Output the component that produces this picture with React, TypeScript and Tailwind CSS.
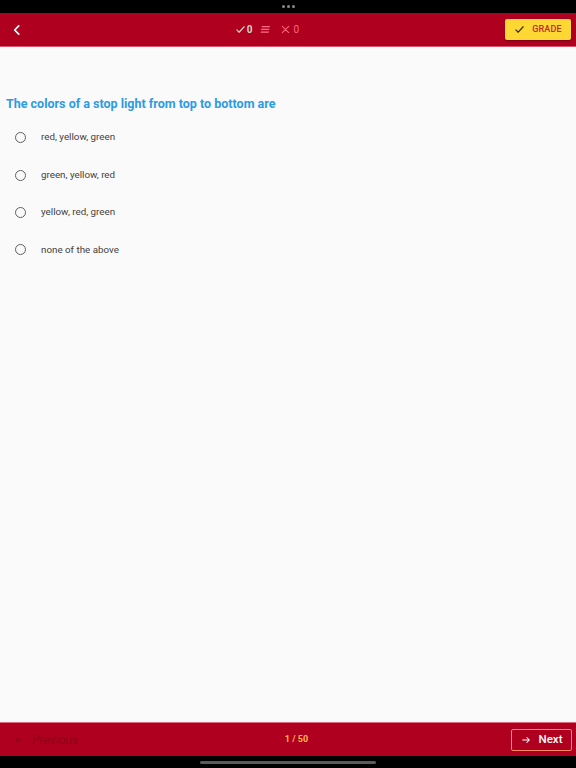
import React from "react";

const options = ["red, yellow, green", "green, yellow, red", "yellow, red, green", "none of the above"];

export default function App() {
  return (
    <div className="w-[576px] h-[768px] flex flex-col bg-[#fafafa] overflow-hidden" style={{ fontFamily: "Roboto, 'Liberation Sans', sans-serif" }}>
      {/* status bar */}
      <div className="h-[13px] bg-black flex items-center justify-center gap-[2px] shrink-0">
        <span className="w-[3px] h-[3px] rounded-full bg-[#8a8a8a]" />
        <span className="w-[3px] h-[3px] rounded-full bg-[#8a8a8a]" />
        <span className="w-[3px] h-[3px] rounded-full bg-[#8a8a8a]" />
      </div>
      {/* header */}
      <div className="h-[34px] bg-[#b00020] border-b border-[#d9566c] flex items-center justify-between px-[9px] shrink-0 relative">
        <svg width="14" height="14" viewBox="0 0 24 24" fill="none" stroke="white" strokeWidth="3" strokeLinecap="round" strokeLinejoin="round" className="ml-[1px]">
          <path d="M15 5l-7 7 7 7" />
        </svg>
        <div className="absolute left-0 right-0 top-0 bottom-0 flex items-center justify-center pointer-events-none">
          <div className="flex items-center ml-[-42px]">
            <svg width="11" height="11" viewBox="0 0 24 24" fill="none" stroke="#d6d6c8" strokeWidth="2.5" strokeLinecap="round" strokeLinejoin="round">
              <path d="M4 13l5 5L20 6" />
            </svg>
            <span className="text-[10px] font-bold text-[#d6d6c8] ml-[1px]">0</span>
            <svg width="11" height="9" viewBox="0 0 22 18" className="ml-[7px]" fill="#ff7088">
              <path d="M4 2h16l-1 2.5H3z" />
              <path d="M3 7.5h16l-1 2.5H2z" />
              <path d="M2 13h16l-1 2.5H1z" />
            </svg>
            <svg width="11" height="11" viewBox="0 0 24 24" fill="none" stroke="#ff6680" strokeWidth="2.2" strokeLinecap="round" className="ml-[9px]">
              <path d="M5 5l14 14M19 5L5 19" />
            </svg>
            <span className="text-[10px] text-[#ff6680] ml-[3px]">0</span>
          </div>
        </div>
        <div className="w-[66px] h-[21px] bg-[#fdd835] rounded-[2px] flex items-center justify-center gap-[7px] shadow-[0_1px_2px_rgba(0,0,0,0.35)] mr-[-4px]">
          <svg width="11" height="11" viewBox="0 0 24 24" fill="none" stroke="#3a2a00" strokeWidth="2.5" strokeLinecap="round" strokeLinejoin="round">
            <path d="M4 13l5 5L20 6" />
          </svg>
          <span className="text-[9px] font-medium text-[#c62828] tracking-[0.2px]">GRADE</span>
        </div>
      </div>
      {/* content */}
      <div className="flex-1 flex flex-col">
        <div className="pt-[49px] px-[6px]">
          <div className="text-[12.5px] font-bold text-[#2c9be6] leading-[15px]">The colors of a stop light from top to bottom are</div>
        </div>
        <div className="flex flex-col mt-[8px]">
          {options.map((o) => (
            <div key={o} className="h-[37.4px] flex items-center pl-[15px]">
              <span className="w-[11px] h-[11px] rounded-full border-[1.5px] border-[#606060]" />
              <span className="ml-[15px] text-[9.8px] text-[#424242]">{o}</span>
            </div>
          ))}
        </div>
      </div>
      {/* footer */}
      <div className="h-[34px] bg-[#b00020] border-t border-[#e06a7e] flex items-center justify-between px-[12px] shrink-0 relative">
        <div className="flex items-center gap-[8px] text-[#8c0018]">
          <svg width="10" height="10" viewBox="0 0 24 24" fill="none" stroke="currentColor" strokeWidth="2.5" strokeLinecap="round" strokeLinejoin="round" className="ml-[2px]">
            <path d="M20 12H4M10 6l-6 6 6 6" />
          </svg>
          <span className="text-[12px]">Previous</span>
        </div>
        <div className="absolute left-0 right-0 top-0 bottom-0 flex items-center justify-center pointer-events-none">
          <span className="text-[9px] font-bold text-[#ffb54a] ml-[17px]">1 / 50</span>
        </div>
        <div className="w-[61px] h-[22px] border border-[#ff8a65] rounded-[2px] flex items-center justify-center gap-[8px] text-white mr-[-8px]">
          <svg width="10" height="10" viewBox="0 0 24 24" fill="none" stroke="white" strokeWidth="2.5" strokeLinecap="round" strokeLinejoin="round">
            <path d="M4 12h16M14 6l6 6-6 6" />
          </svg>
          <span className="text-[11.5px] font-medium">Next</span>
        </div>
      </div>
      {/* home indicator */}
      <div className="h-[12px] bg-black flex items-center justify-center shrink-0">
        <span className="w-[176px] h-[3px] rounded-full bg-[#5a5a5a]" />
      </div>
    </div>
  );
}
